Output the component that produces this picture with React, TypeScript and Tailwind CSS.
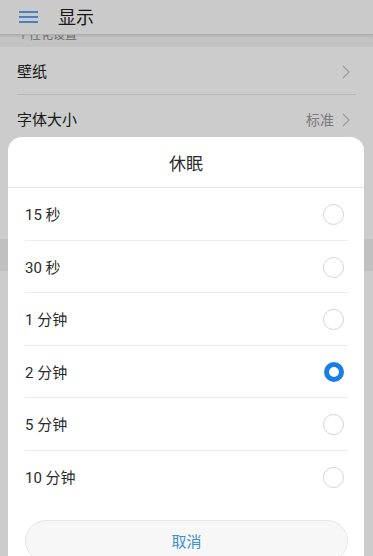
import React from 'react'

const options = ['15 秒', '30 秒', '1 分钟', '2 分钟', '5 分钟', '10 分钟']
const selected = 3

function Chevron() {
  return (
    <svg width="8" height="14" viewBox="0 0 8 14" fill="none">
      <polyline points="1,1 7,7 1,13" stroke="#c4c4c4" strokeWidth="1.3" />
    </svg>
  )
}

function Radio({ on }: { on: boolean }) {
  if (on) {
    return <div className="w-[20px] h-[20px] rounded-full border-[5px] border-[#1a7ee6] bg-white" />
  }
  return <div className="w-[21px] h-[21px] rounded-full border border-[#d4d4d4] bg-white" />
}

export default function App() {
  return (
    <div
      className="relative w-[373px] h-[556px] overflow-hidden bg-white"
      style={{ fontFamily: 'Roboto, "Noto Sans CJK SC", sans-serif' }}
    >
      {/* page behind the sheet */}
      <div className="flex flex-col">
        <div className="h-[35px] flex items-center border-b border-[#dadada] bg-[#fdfdfd] shadow-[0_1px_2px_rgba(0,0,0,0.1)] relative z-10">
          <svg className="ml-[19px]" width="19" height="12" viewBox="0 0 19 12">
            <rect x="0" y="0" width="19" height="2" fill="#5aa2f0" />
            <rect x="0" y="5" width="19" height="2" fill="#5aa2f0" />
            <rect x="0" y="10" width="19" height="2" fill="#5aa2f0" />
          </svg>
          <span className="ml-[20px] pt-[1px] text-[18px] text-[#1c1c1c]">显示</span>
        </div>
        <div className="h-[12px] bg-[#f3f3f3] overflow-hidden pl-[17px]">
          <div className="-mt-[9px] text-[12px] text-[#888]">个性化设置</div>
        </div>
        <div className="mx-[17px]">
          <div className="h-[48px] flex items-center justify-between border-b border-[#e6e6e6]">
            <span className="pt-[3px] text-[15px] text-[#222]">壁纸</span>
            <span className="mr-[6px] pt-[2px]"><Chevron /></span>
          </div>
          <div className="h-[48px] flex items-center justify-between border-b border-[#e6e6e6]">
            <span className="pt-[3px] text-[15px] text-[#222]">字体大小</span>
            <span className="flex items-center gap-[8px] mr-[6px] pt-[3px]">
              <span className="text-[14px] text-[#999]">标准</span>
              <Chevron />
            </span>
          </div>
          <div className="h-[48px] border-b border-[#e6e6e6]" />
        </div>
        <div className="h-[48px]" />
        <div className="h-[32px] bg-[#f1f1f1]" />
      </div>

      {/* dim */}
      <div className="absolute inset-0 bg-black/20 z-20" />

      {/* sheet */}
      <div className="absolute left-[8px] right-[9px] top-[137px] z-30 bg-white rounded-t-[14px]">
        <div className="h-[51px] flex items-center justify-center border-b border-[#e4e4e4]">
          <span className="pt-[5px] text-[17px] text-[#2a2a2a]">休眠</span>
        </div>
        <div className="px-[17px] pr-[16px]">
          {options.map((o, i) => (
            <div
              key={o}
              className={`h-[52.5px] flex items-center justify-between ${i < options.length - 1 ? 'border-b border-[#ececec]' : ''}`}
            >
              <span className="pt-[3px] text-[15px] text-[#2a2a2a]">{o}</span>
              <span className="mr-[4px] pt-[2px]"><Radio on={i === selected} /></span>
            </div>
          ))}
          <div className="pt-[17px]">
            <div className="h-[42px] rounded-full bg-[#f7f7f7] border border-[#e6e6e6] flex items-center justify-center">
              <span className="pt-[2px] text-[15px] text-[#3d8fd6]">取消</span>
            </div>
          </div>
        </div>
      </div>
    </div>
  )
}
